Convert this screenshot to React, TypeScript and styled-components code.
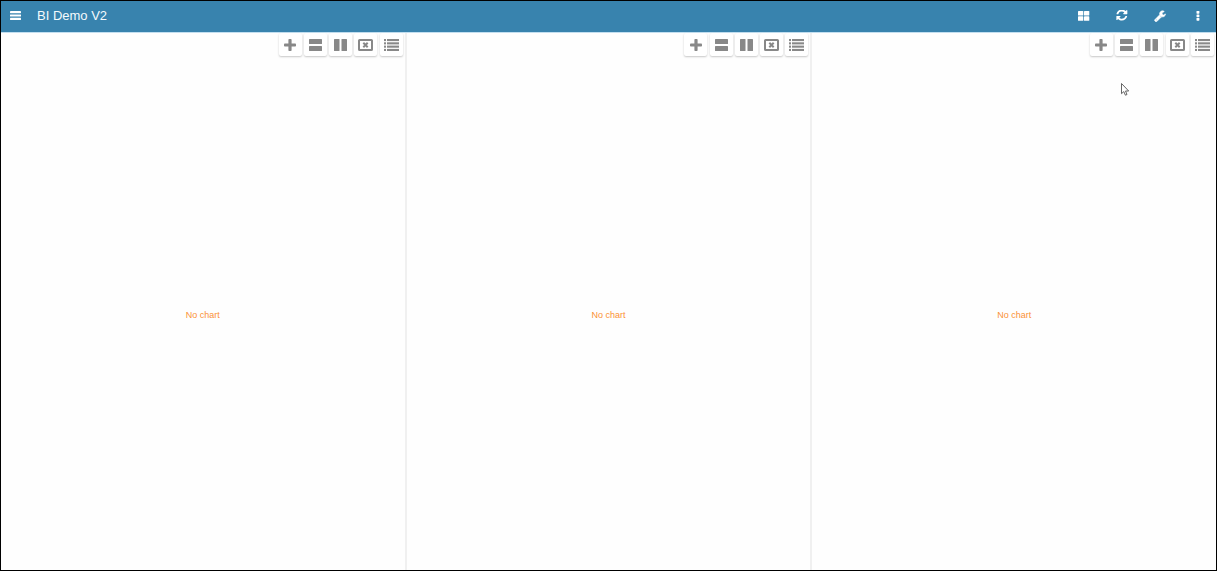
import React from 'react';
import styled, { createGlobalStyle } from 'styled-components';

const GlobalStyle = createGlobalStyle`
  *, *::before, *::after { box-sizing: border-box; }
  body {
    margin: 0;
    background: #fefefe;
    font-family: "Liberation Sans", Arial, sans-serif;
  }
`;

const Shell = styled.div`
  display: flex;
  flex-direction: column;
  min-height: 100vh;
  border: 1px solid #000;
`;

const TopBar = styled.header`
  display: flex;
  align-items: center;
  justify-content: space-between;
  height: 31px;
  padding: 0 8px 2px 4px;
  background: #3883ae;
  box-shadow: 0 1px 0 #c3dff0;
  color: #fff;
`;

const Brand = styled.div`
  display: flex;
  align-items: center;
  gap: 12px;
`;

const Title = styled.h1`
  margin: 0;
  font-size: 13px;
  font-weight: 400;
  line-height: 20px;
  color: #f4fafd;
`;

const Actions = styled.nav`
  display: flex;
  gap: 18px;
`;

const BarButton = styled.button`
  display: flex;
  align-items: center;
  justify-content: center;
  width: 20px;
  height: 23px;
  padding: 0;
  border: 0;
  background: none;
  color: inherit;
  cursor: pointer;
`;

const Board = styled.main`
  display: grid;
  grid-template-columns: repeat(3, 1fr);
  gap: 2px;
  flex: 1;
  margin-top: 1px;
  background: #f0f0f0;
`;

const Panel = styled.section`
  display: flex;
  flex-direction: column;
  padding-right: 2px;
  background: #fefefe;
`;

const Toolbar = styled.div`
  display: flex;
  justify-content: space-between;
  align-self: flex-end;
  width: 124px;
`;

const ToolButton = styled.button`
  display: flex;
  align-items: center;
  justify-content: center;
  width: 23px;
  height: 23px;
  padding: 0;
  border: 0;
  border-radius: 2px;
  background: #fff;
  box-shadow: 0 1px 2px rgba(0, 0, 0, 0.22);
  color: #888;
  cursor: pointer;
`;

const Empty = styled.p`
  display: flex;
  flex: 1;
  align-items: center;
  justify-content: center;
  margin: 0;
  padding: 4px 0 0 2px;
  font-size: 9px;
  line-height: 12px;
  color: #fb9236;
`;

const Pointer = styled.svg`
  position: absolute;
  top: 82px;
  right: 88px;
  pointer-events: none;
`;

const Glyph = styled.svg.attrs({ 'aria-hidden': true })`
  display: block;
  fill: currentColor;
`;

const MenuIcon = () => (
  <Glyph width="11" height="9" viewBox="0 0 11 9">
    <rect width="11" height="2.200" rx="0.4" />
    <rect y="3.4" width="11" height="2.200" rx="0.4" />
    <rect y="6.8" width="11" height="2.200" rx="0.4" />
  </Glyph>
);

const GridIcon = () => (
  <Glyph width="12" height="10" viewBox="0 0 12 10">
    <rect width="5.300" height="4.500" rx="0.6" />
    <rect x="6" width="5.300" height="4.500" rx="0.6" />
    <rect y="5.300" width="5.300" height="4.500" rx="0.6" />
    <rect x="6" y="5.300" width="5.300" height="4.500" rx="0.6" />
  </Glyph>
);

const RefreshIcon = () => (
  <Glyph width="12" height="11" viewBox="0 60 1576 1540">
    <path d="M1511 928q0 5-1 7-64 268-268 434.5t-478 166.5q-146 0-282.5-55t-243.500-157l-129 129q-19 19-45 19t-45-19-19-45v-448q0-26 19-45t45-19h448q26 0 45 19t19 45-19 45l-137 137q71 66 161 102t187 36q134 0 250-65t186-179q11-17 53-117 8-23 30-23h192q13 0 22.500 9.500t9.500 22.500zm25-800v448q0 26-19 45t-45 19h-448q-26 0-45-19t-19-45 19-45l138-138q-148-137-349-137-134 0-250 65t-186 179q-11 17-53 117-8 23-30 23h-199q-13 0-22.500-9.500t-9.500-22.500v-7q65-268 270-434.500t480-166.500q146 0 284 55.500t245 156.500l130-129q19-19 45-19t45 19 19 45z" />
  </Glyph>
);

const WrenchIcon = () => (
  <Glyph width="12" height="12" viewBox="0 0 1792 1792">
    <path d="M448 1472q0-26-19-45t-45-19-45 19-19 45 19 45 45 19 45-19 19-45zm644-420l-682 682q-37 37-90 37-52 0-91-37l-106-108q-38-36-38-90 0-53 38-91l681-681q39 98 114.500 173.500t173.500 114.500zm634-435q0 39-23 106-47 134-164.500 217.500t-258.500 83.500q-185 0-316.500-131.500t-131.500-316.500 131.500-316.500 316.500-131.500q58 0 121.500 16.500t107.500 46.500q16 11 16 28t-16 28l-293 169v224l193 107q5-3 79-48.500t135.500-81 70.500-35.500q15 0 23.500 10t8.500 25z" stroke="currentColor" strokeWidth="90" />
  </Glyph>
);

const MoreIcon = () => (
  <Glyph width="4" height="10" viewBox="0 0 4 10">
    <rect x="0.500" width="2.900" height="2.700" rx="0.6" />
    <rect x="0.500" y="3.500" width="2.900" height="2.700" rx="0.6" />
    <rect x="0.500" y="7" width="2.900" height="2.700" rx="0.6" />
  </Glyph>
);

const PlusIcon = () => (
  <Glyph width="12" height="12" viewBox="0 0 12 12">
    <rect x="4.400" width="3.200" height="12" rx="0.8" />
    <rect y="4.400" width="12" height="3.200" rx="0.8" />
  </Glyph>
);

const RowsIcon = () => (
  <Glyph width="13" height="12" viewBox="0 0 13 12">
    <rect width="13" height="5" rx="0.5" />
    <rect y="7" width="13" height="5" rx="0.5" />
  </Glyph>
);

const ColumnsIcon = () => (
  <Glyph width="13" height="12" viewBox="0 0 13 12">
    <rect width="5.500" height="12" rx="0.5" />
    <rect x="7.500" width="5.500" height="12" rx="0.5" />
  </Glyph>
);

const CloseIcon = () => (
  <Glyph width="15" height="12" viewBox="0 0 15 12">
    <rect x="1" y="1" width="13" height="10" rx="0.6" fill="none" stroke="currentColor" strokeWidth="2" />
    <path d="M5.300 3.800l4.400 4.400M9.700 3.800l-4.400 4.400" fill="none" stroke="currentColor" strokeWidth="2" />
  </Glyph>
);

const ListIcon = () => (
  <Glyph width="15" height="12" viewBox="0 0 15 12">
    {[0, 3.3, 6.6, 9.9].map((y) => (
      <React.Fragment key={y}>
        <rect y={y} width="2" height="2.100" />
        <rect x="3" y={y} width="12" height="2.100" />
      </React.Fragment>
    ))}
  </Glyph>
);

const actions = [
  { label: 'Dashboards', Icon: GridIcon },
  { label: 'Refresh', Icon: RefreshIcon },
  { label: 'Settings', Icon: WrenchIcon },
  { label: 'More', Icon: MoreIcon },
];

const tools = [
  { label: 'Add chart', Icon: PlusIcon },
  { label: 'Split into rows', Icon: RowsIcon },
  { label: 'Split into columns', Icon: ColumnsIcon },
  { label: 'Remove panel', Icon: CloseIcon },
  { label: 'Panel options', Icon: ListIcon },
];

const ChartPanel = () => (
  <Panel>
    <Toolbar role="toolbar">
      {tools.map(({ label, Icon }) => (
        <ToolButton key={label} type="button" aria-label={label}>
          <Icon />
        </ToolButton>
      ))}
    </Toolbar>
    <Empty>No chart</Empty>
  </Panel>
);

export default function App() {
  return (
    <>
      <GlobalStyle />
      <Shell>
        <TopBar>
          <Brand>
            <BarButton type="button" aria-label="Menu">
              <MenuIcon />
            </BarButton>
            <Title>BI Demo V2</Title>
          </Brand>
          <Actions>
            {actions.map(({ label, Icon }) => (
              <BarButton key={label} type="button" aria-label={label}>
                <Icon />
              </BarButton>
            ))}
          </Actions>
        </TopBar>
        <Board>
          <ChartPanel />
          <ChartPanel />
          <ChartPanel />
        </Board>
      </Shell>
      <Pointer width="9" height="14" viewBox="0 0 9 14" aria-hidden="true">
        <path d="M1.500 1.500v10.200l2.300-2.100 1.600 3.600 1.600-.7-1.500-3.500h3.200z" fill="#fff" stroke="#555" strokeWidth="0.900" />
      </Pointer>
    </>
  );
}
